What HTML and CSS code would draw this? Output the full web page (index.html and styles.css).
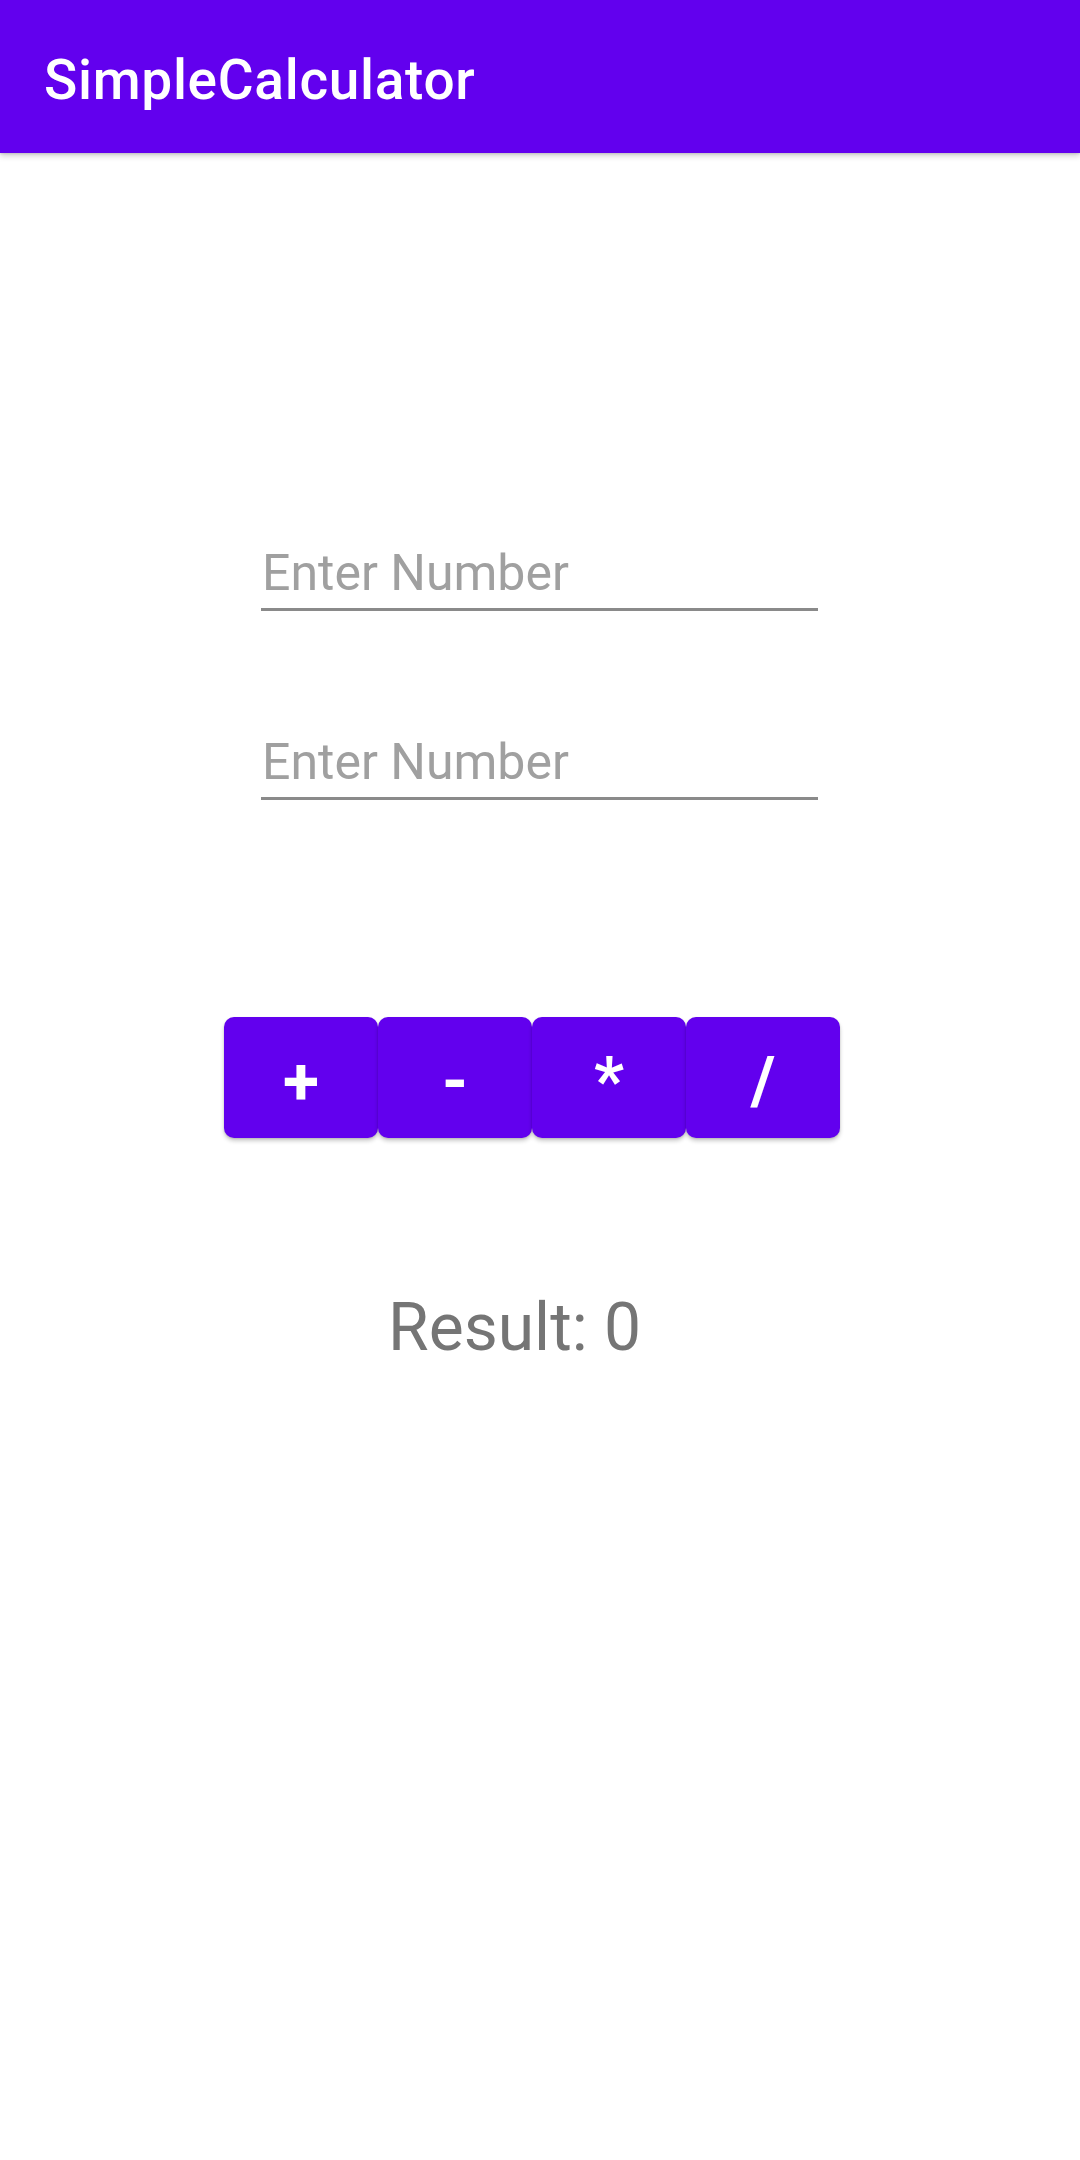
FILE: index.html
```html
<!DOCTYPE html>
<html>
<head>
<meta charset="utf-8">
<link rel="stylesheet" href="styles.css">
</head>
<body>
<div class="appbar"><div class="title">SimpleCalculator</div></div>
<div class="content">
  <div class="field field-first"><span class="hint">Enter Number</span></div>
  <div class="field field-second"><span class="hint">Enter Number</span></div>
  <div class="buttons">
    <div class="btn">+</div>
    <div class="btn">-</div>
    <div class="btn">*</div>
    <div class="btn">/</div>
  </div>
  <div class="result">Result: 0</div>
</div>
</body>
</html>
```
FILE: styles.css
```css
html, body {
  margin: 0;
  padding: 0;
  background: #ffffff;
}
body {
  width: 1080px;
  height: 2160px;
  overflow: hidden;
  font-family: Roboto, "Noto Sans", sans-serif;
}
.appbar {
  position: relative;
  z-index: 2;
  box-sizing: border-box;
  height: 153px;
  background: #6200ee;
  padding: 48px 0 0 44px;
  box-shadow: 0 3px 6px rgba(0, 0, 0, 0.18), 0 1px 2px rgba(0, 0, 0, 0.12);
}
.title {
  color: #ffffff;
  font-size: 55px;
  font-weight: 500;
  line-height: 64px;
  letter-spacing: 0.0125em;
}
.content {
  display: flex;
  flex-direction: column;
  align-items: flex-start;
}
.field {
  margin-left: 261px;
  width: 557px;
  padding: 0 0 5px 1px;
  box-sizing: border-box;
  border-bottom: 3px solid #8a8a8a;
  font-size: 50px;
  line-height: 60px;
  color: #a0a0a0;
}
.field-first {
  margin-top: 390px;
}
.field-second {
  margin-top: 121px;
}
.buttons {
  margin-top: 217px;
  margin-left: 224px;
  display: flex;
}
.btn {
  box-sizing: border-box;
  width: 154px;
  height: 121px;
  padding-top: 8px;
  background: #6200ee;
  border-radius: 10px;
  color: #ffffff;
  font-size: 66px;
  font-weight: 700;
  line-height: 1;
  display: flex;
  align-items: center;
  justify-content: center;
  box-shadow: 0 3px 4px rgba(0, 0, 0, 0.2), 0 1px 2px rgba(0, 0, 0, 0.12);
}
.result {
  margin-top: 150px;
  margin-left: 388px;
  font-size: 66px;
  line-height: 80px;
  color: #757575;
}
```
